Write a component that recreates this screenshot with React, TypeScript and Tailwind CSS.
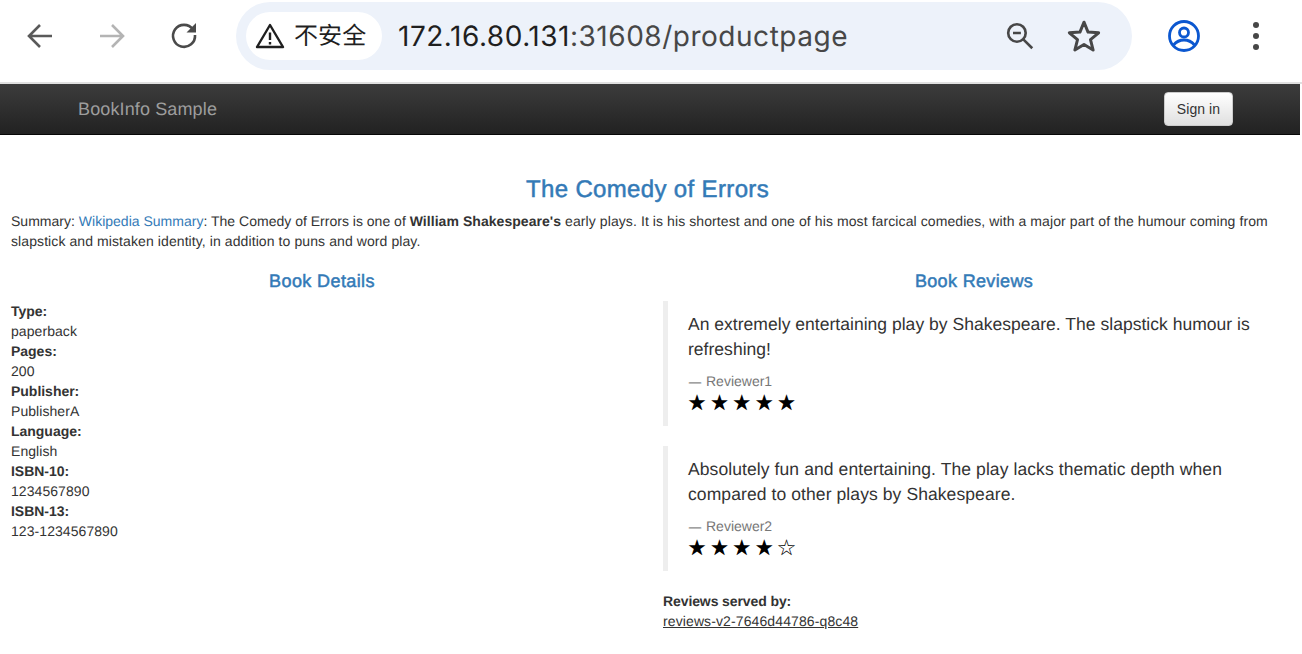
const sans = "font-['Liberation_Sans','Noto_Sans_CJK_SC',sans-serif]"
const heading = "text-center font-normal text-[#337ab7] [-webkit-text-stroke:0.5px_#337ab7]"

const details = [
  ["Type:", "paperback"],
  ["Pages:", "200"],
  ["Publisher:", "PublisherA"],
  ["Language:", "English"],
  ["ISBN-10:", "1234567890"],
  ["ISBN-13:", "123-1234567890"],
]

const reviews = [
  {
    text: "An extremely entertaining play by Shakespeare. The slapstick humour is refreshing!",
    who: "Reviewer1",
    stars: "★★★★★",
    spacing: "tracking-[0.025px]",
  },
  {
    text: "Absolutely fun and entertaining. The play lacks thematic depth when compared to other plays by Shakespeare.",
    who: "Reviewer2",
    stars: "★★★★☆",
    spacing: "tracking-[0.09px]",
  },
]

function Toolbar() {
  return (
    <div className="flex h-[82px] items-center bg-white pb-[10px]">
      <svg className="ml-[26px] h-7 w-7" viewBox="0 0 28 28" fill="none" stroke="#5a5a5a" strokeWidth="2.6">
        <path d="M26 14H3M14 3 3 14l11 11" />
      </svg>
      <svg className="ml-[44px] h-7 w-7" viewBox="0 0 28 28" fill="none" stroke="#b4b4b4" strokeWidth="2.6">
        <path d="M2 14h23M14 3l11 11-11 11" />
      </svg>
      <svg className="ml-[44px] h-7 w-7" viewBox="0 0 28 28" fill="none">
        <path d="M23 7.500A11 11 0 1 0 25 13" stroke="#4a4a4a" strokeWidth="2.600" />
        <path d="M26 1v9.500h-9.500z" fill="#4a4a4a" />
      </svg>
      <div className="ml-[38px] flex h-[68px] w-[896px] items-center rounded-full bg-[#edf2fa] pl-[10px]">
        <div className="flex h-[48px] w-[136px] items-center rounded-full bg-white pl-[9px]">
          <svg className="h-[26px] w-[30px]" viewBox="0 0 30 26" fill="none">
            <path d="M15 2 28 24H2z" stroke="#1f1f1f" strokeWidth="2.400" strokeLinejoin="round" />
            <path d="M15 9.500v7.500M15 19v2.500" stroke="#1f1f1f" strokeWidth="2.400" />
          </svg>
          <span className={`${sans} ml-[9px] mt-[1px] text-[24px] leading-none text-[#1f1f1f]`}>不安全</span>
        </div>
        <span className="ml-[16px] font-['Inter',sans-serif] text-[28px] leading-none tracking-[0.52px] text-[#1f1f1f]">
          172.16.80.131<span className="text-[#474747]">:31608/productpage</span>
        </span>
        <svg className="ml-auto h-7 w-7" viewBox="0 0 32 32" fill="none" stroke="#474747" strokeWidth="3">
          <circle cx="12.500" cy="12.500" r="10" />
          <path d="M8 12.500h9M19.500 19.500 30 30" />
        </svg>
        <svg className="ml-[33px] mr-[31px] h-[34px] w-[34px]" viewBox="0 0 32 32" fill="none" stroke="#474747" strokeWidth="2.800" strokeLinejoin="round">
          <path d="m16 3 3.800 9.300 10 .7-7.700 6.400 2.500 9.800-8.600-5.300-8.600 5.300 2.500-9.800L2.200 13l10-.7z" />
        </svg>
      </div>
      <svg className="ml-[36px] h-8 w-8" viewBox="0 0 32 32" fill="none" stroke="#0b57d0" strokeWidth="2.800">
        <circle cx="16" cy="16" r="14.500" />
        <circle cx="16" cy="12.500" r="4.500" />
        <path d="M5.500 25c3-3.500 6.500-5 10.500-5s7.500 1.500 10.500 5" />
      </svg>
      <div className="ml-[53px] flex flex-col gap-[5px]">
        <span className="h-[6px] w-[6px] rounded-full bg-[#474747]" />
        <span className="h-[6px] w-[6px] rounded-full bg-[#474747]" />
        <span className="h-[6px] w-[6px] rounded-full bg-[#474747]" />
      </div>
    </div>
  )
}

export default function App() {
  return (
    <div className={`${sans} h-[654px] w-[1302px] overflow-hidden bg-white text-[14px] leading-[20px] tracking-[0.065px] text-[#333] [text-rendering:geometricPrecision]`}>
      <Toolbar />
      <div className="h-[2px] bg-[#e0e0e0]" />
      <nav className="flex h-[51px] w-[1300px] items-center justify-between border-b border-[#080808] bg-gradient-to-b from-[#3c3c3c] to-[#222] pl-[78px] pr-[67px]">
        <span className="text-[18px] tracking-[0.13px] text-[#9d9d9d]">BookInfo Sample</span>
        <button className="h-[34px] w-[69px] rounded-[4px] border border-[#ccc] bg-gradient-to-b from-white to-[#e0e0e0] text-[14px] text-[#333]">
          Sign in
        </button>
      </nav>

      <div className="w-[1300px] pl-[11px] pr-[16px]">
        <h3 className={`${heading} mt-[42px] text-[24px] leading-[26px] tracking-[0.35px]`}>The Comedy of Errors</h3>
        <p className="mt-[8px] tracking-[0.09px]">
          <span className="tracking-[0.01px]">
            Summary: <span className="text-[#337ab7]">Wikipedia Summary</span>: The Comedy of Errors is one of{" "}
          </span>
          <b className="tracking-[0.05px]">William Shakespeare's</b> early plays. It is his shortest and one of his most farcical comedies, with a
          major part of the humour coming from slapstick and mistaken identity, in addition to puns and word play.
        </p>
      </div>

      <div className="mt-[20px] flex w-[1300px]">
        <div className="w-[650px] pl-[11px] pr-[17px]">
          <h4 className={`${heading} text-[18px] leading-[20px] tracking-[0.4px]`}>Book Details</h4>
          <dl className="mt-[10px]">
            {details.map(([k, v]) => (
              <div key={k}>
                <dt className="font-bold tracking-[-0.02px]">{k}</dt>
                <dd>{v}</dd>
              </div>
            ))}
          </dl>
        </div>
        <div className="w-[650px] pl-[13px] pr-[15px]">
          <h4 className={`${heading} text-[18px] leading-[20px] tracking-[0.35px]`}>Book Reviews</h4>
          <div className="mt-[10px] flex flex-col gap-[20px]">
            {reviews.map((r) => (
              <blockquote key={r.who} className="border-l-[5px] border-[#eee] pt-[11px] pb-[13px] pl-[20px] pr-[20px] text-[17.5px] leading-[25px]">
                <p className={r.spacing}>{r.text}</p>
                <p className="mt-[9px] text-[14px] leading-[20px] tracking-normal text-[#777]">
                  <span className="ml-[1px] mr-[5px] text-[12px] [-webkit-text-stroke:0.3px_#777]">—</span>
                  {r.who}
                </p>
                <p className="h-[21px] text-[18px] leading-[23px] tracking-[4.4px] text-black">{r.stars}</p>
              </blockquote>
            ))}
          </div>
          <div className="mt-[20px]">
            <b className="tracking-[-0.1px]">Reviews served by:</b>
            <br />
            <u className="tracking-[0.11px]">reviews-v2-7646d44786-q8c48</u>
          </div>
        </div>
      </div>
    </div>
  )
}
